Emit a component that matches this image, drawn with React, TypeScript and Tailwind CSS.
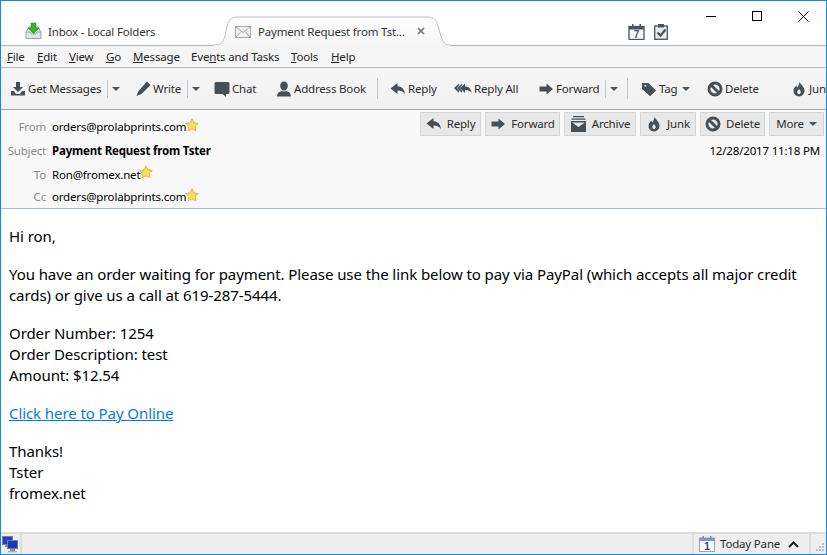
import React from 'react';

const ICON = '#474f55';

const Icon: React.FC<{ w?: number; h?: number; vb?: string; children: React.ReactNode }> = ({ w = 16, h = 16, vb = '0 0 16 16', children }) => (
    <svg width={w} height={h} viewBox={vb} fill={ICON} className="shrink-0">{children}</svg>
);

const GetIcon = () => (
    <Icon>
        <path d="M6 1h4v5h3L8 11 3 6h3z" />
        <path d="M1 10h3l2 3h4l2-3h3v4.500H1z" />
    </Icon>
);
const WriteIcon = () => (
    <Icon><path d="M12 .500l3.500 3.500-9 9-5 2 2-5z" /></Icon>
);
const ChatIcon = () => (
    <Icon>
        <path d="M2 1h12a1.500 1.500 0 0 1 1.500 1.500v9A1.500 1.500 0 0 1 14 13h-2v3l-3.500-3H2A1.500 1.500 0 0 1 .500 11.500v-9A1.500 1.500 0 0 1 2 1z" />
    </Icon>
);
const PersonIcon = () => (
    <Icon>
        <path d="M8 .500c2.400 0 3.800 1.800 3.800 4.200S10.200 9.500 8 9.500 4.200 7.100 4.200 4.700 5.600.500 8 .500z" />
        <path d="M1 15.500c0-3.200 1.500-4.800 5-5.500 1.200.8 2.800.8 4 0 3.500.7 5 2.300 5 5.500z" />
    </Icon>
);
const ReplyIcon = () => (
    <Icon><path d="M7.500 2v3.300c4.200 0 7 2.700 7.500 8-1.500-2.700-3.700-3.800-7.500-3.800V13L.500 7.500z" /></Icon>
);
const ReplyAllIcon = () => (
    <Icon w={18} vb="0 0 18 16">
        <path d="M5 2.500v1.800L2.800 7 5 9.700v2.300L0 7z" />
        <path d="M8 2.500v1.800L5.800 7 8 9.700v2.300L3 7z" />
        <path d="M11 2.500v3c3.500 0 6 2 6.500 6.500-1.500-2.200-3.300-3-6.500-3v3L6 7z" />
    </Icon>
);
const ForwardIcon = () => (
    <Icon><path d="M8.500 2.500L15 8l-6.500 5.500V10.500H1.500v-5h7z" /></Icon>
);
const TagIcon = () => (
    <Icon>
        <path fillRule="evenodd" d="M1 2h6.500l7.500 7.500-5.800 5.800L1 8zM4.300 3.800a1 1 0 1 0 0 2 1 1 0 0 0 0-2z" />
    </Icon>
);
const DeleteIcon = () => (
    <Icon>
        <path fillRule="evenodd" d="M8 .500a7.500 7.500 0 1 1 0 15 7.500 7.500 0 0 1 0-15zM3.900 6a4.600 4.600 0 0 0 6.100 6.100zM6 3.900l6.100 6.100A4.600 4.600 0 0 0 6 3.900z" />
    </Icon>
);
const JunkIcon = () => (
    <Icon>
        <path fillRule="evenodd" d="M8.500.500c0 2.500 5 4.500 5 9.300 0 3.300-2.500 5.700-5.500 5.700s-5.500-2.400-5.500-5.700c0-2.600 1.800-3.800 2.800-5.300.3 1 .6 1.500 1.200 2C7.300 5 8.300 3 8.500.500zM8 8c-1 1-1.700 1.900-1.700 3.200 0 1 .8 1.800 1.700 1.800s1.700-.8 1.700-1.800C9.700 9.900 9 9 8 8z" />
    </Icon>
);
const ArchiveIcon = () => (
    <Icon w={17} h={18} vb="0 0 17 18">
        <path d="M3 1h11v1.200H3zM1.500 3.500h14v1.200h-14z" />
        <path d="M1 6h15v11H1zM2.500 7.800L8.500 12l6-4.200v-.3h-12z" />
    </Icon>
);

const Caret: React.FC<{ className?: string }> = ({ className = '' }) => (
    <span className={`shrink-0 w-0 h-0 border-x-[4px] border-x-transparent border-t-[4px] border-t-[#4d555b] ${className}`}></span>
);

const Sep: React.FC<{ className?: string }> = ({ className = '' }) => (
    <span className={`shrink-0 w-px bg-[#c4c6c8] ${className}`}></span>
);

const Star = () => (
    <svg width="14" height="14" viewBox="0 0 13 13" className="shrink-0 -ml-px -mt-1">
        <path d="M6.500.8l1.800 3.700 4 .6-2.900 2.800.7 4-3.600-1.900-3.600 1.900.7-4L.7 5.100l4-.6z" fill="#fcdc5e" stroke="#d8ac3c" strokeWidth="0.8" />
    </svg>
);

const TopBtn: React.FC<{ icon: React.ReactNode; label: string; className?: string }> = ({ icon, label, className = '' }) => (
    <div className={`shrink-0 flex items-center gap-[2px] ${className}`}>
        {icon}
        <span>{label}</span>
    </div>
);

const HdrBtn: React.FC<{ icon?: React.ReactNode; label: string; w: string; caret?: boolean }> = ({ icon, label, w, caret }) => (
    <div className={`h-6 flex items-center justify-center gap-[5px] bg-[#e8e8e8] border border-[#d4d4d4] text-[#2d2d2d] ${w}`}>
        {icon}
        <span>{label}</span>
        {caret && <Caret />}
    </div>
);

const HdrRow: React.FC<{ label: string; className?: string; children: React.ReactNode }> = ({ label, className = '', children }) => (
    <div className={`flex items-center ${className}`}>
        <span className="w-[45px] text-right text-[#8a8a8a] shrink-0">{label}</span>
        <span className="ml-[6px] flex items-center text-black">{children}</span>
    </div>
);

const MenuItem: React.FC<{ pre?: string; u: string; post: string; w: string }> = ({ pre = '', u, post, w }) => (
    <span className={w}>{pre}<span className="underline">{u}</span>{post}</span>
);

const App: React.FC = () => {
    return (
        <div className="w-[827px] h-[555px] overflow-hidden flex flex-col bg-white border border-[#1a86d9] text-[11.5px] tracking-[-0.18px] text-[#2b2b2b] font-['Noto_Sans','Open_Sans',sans-serif]">
            {/* title bar + tabs */}
            <div className="h-[45px] flex shrink-0 relative border-b border-[#aab4be]">
                <div className="w-[224px] pl-6 pt-[22px] flex items-start gap-[6px]">
                    <svg width="17" height="18" viewBox="0 0 17 18" className="shrink-0 -mt-[1px]">
                        <path d="M1 10l3-5h9l3 5v6.500H1z" fill="#dfe4e6" stroke="#9aa5aa" />
                        <path d="M1 10h4l1.500 2h4L12 10h4" fill="none" stroke="#9aa5aa" />
                        <path d="M6 1h5v5h3l-5.500 5.500L3 6h3z" fill="#3fae2a" stroke="#2c8a1c" strokeWidth="0.6" />
                    </svg>
                    <span className="text-[#333] leading-[18px]">Inbox - Local Folders</span>
                </div>
                <div className="w-[216px] h-[29px] mt-4 relative flex items-center pl-[10px] -mb-px">
                    <svg width="237" height="30" viewBox="0 0 237 30" className="absolute -left-[12px] -top-[1px]">
                        <defs>
                            <linearGradient id="tab" x1="0" y1="0" x2="0" y2="1">
                                <stop offset="0" stopColor="#ffffff" />
                                <stop offset="1" stopColor="#f5f5f5" />
                            </linearGradient>
                        </defs>
                        <path d="M0 29C8 29 10 27 12 20L14 10C16 3 19 1 26 1H214C221 1 223 3 225 10L228 20C230 27 232 29 237 29V30H0z" fill="url(#tab)" />
                        <path d="M0 29C8 29 10 27 12 20L14 10C16 3 19 1 26 1H214C221 1 223 3 225 10L228 20C230 27 232 29 237 29" fill="none" stroke="#bcc2c7" />
                    </svg>
                    <svg width="16" height="12" viewBox="0 0 16 12" className="shrink-0 relative">
                        <rect x="0.500" y="0.500" width="15" height="11" fill="#f1f1f1" stroke="#a4a8aa" />
                        <path d="M1 1l7 5.500L15 1M1 11l5-5.500M15 11l-5-5.500" fill="none" stroke="#a4a8aa" />
                    </svg>
                    <span className="ml-[7px] text-[#333] relative">Payment Request from Tst...</span>
                    <svg width="8" height="8" viewBox="0 0 8 8" className="absolute left-[192px] top-[10px]">
                        <path d="M1 1l6 6M7 1L1 7" stroke="#70767a" strokeWidth="1.700" />
                    </svg>
                </div>
                <div className="flex items-start pt-[23px] ml-[187px] gap-[9px]">
                    <svg width="17" height="16" viewBox="0 0 17 16" className="shrink-0">
                        <rect x="1" y="2.500" width="15" height="13" fill="#f4f5f6" stroke="#4d555b" strokeWidth="1.300" />
                        <path d="M1 3h15v2.500H1zM4 0h1.500v3H4zM11.500 0H13v3h-1.500z" fill="#4d555b" />
                        <text x="8.500" y="14" fontSize="10" fontWeight="700" textAnchor="middle" fill="#4d555b" fontFamily="Liberation Sans">7</text>
                    </svg>
                    <svg width="14" height="16" viewBox="0 0 14 16" className="shrink-0">
                        <rect x="0.700" y="2" width="12.600" height="13.300" fill="#e7e9ea" stroke="#4d555b" strokeWidth="1.300" />
                        <path d="M4 0h6v3.500H4z" fill="#4d555b" />
                        <path d="M3.500 8.500l3 3 5-6" fill="none" stroke="#4d555b" strokeWidth="2.200" />
                    </svg>
                </div>
                {/* window controls */}
                <div className="absolute top-0 right-0 flex">
                    <div className="w-[46px] h-[30px] flex items-center justify-center"><span className="w-[10px] h-px bg-black"></span></div>
                    <div className="w-[46px] h-[30px] flex items-center justify-center"><span className="w-[10px] h-[10px] border border-black"></span></div>
                    <div className="w-[46px] h-[30px] flex items-center justify-center">
                        <svg width="11" height="11" viewBox="0 0 11 11"><path d="M.5.500l10 10M10.500.500l-10 10" stroke="#000" strokeWidth="1" /></svg>
                    </div>
                </div>
            </div>

            {/* menu */}
            <div className="h-[22px] flex items-center pl-[6px] bg-[#f5f5f5] border-b border-[#b4b6b8] shrink-0 text-[#222]">
                <MenuItem u="F" post="ile" w="w-[30px]" />
                <MenuItem u="E" post="dit" w="w-[32px]" />
                <MenuItem u="V" post="iew" w="w-[37px]" />
                <MenuItem u="G" post="o" w="w-[27px]" />
                <MenuItem u="M" post="essage" w="w-[58px]" />
                <MenuItem pre="Eve" u="n" post="ts and Tasks" w="w-[100px]" />
                <MenuItem u="T" post="ools" w="w-[40px]" />
                <MenuItem u="H" post="elp" w="w-[30px]" />
            </div>

            {/* main toolbar */}
            <div className="h-[42px] flex items-center pl-[9px] bg-gradient-to-b from-[#f5f5f5] to-[#f1f1f1] border-b border-[#a3a8ad] shrink-0 overflow-hidden whitespace-nowrap">
                <TopBtn icon={<GetIcon />} label="Get Messages" className="w-[97px]" />
                <Sep className="h-[18px]" />
                <Caret className="ml-[4px]" />
                <TopBtn icon={<WriteIcon />} label="Write" className="ml-[15px] w-[52px]" />
                <Sep className="h-[18px]" />
                <Caret className="ml-[4px]" />
                <TopBtn icon={<ChatIcon />} label="Chat" className="ml-[14px] w-[62px]" />
                <TopBtn icon={<PersonIcon />} label="Address Book" className="w-[101px]" />
                <Sep className="h-[21px] bg-[#a8acb0]" />
                <TopBtn icon={<ReplyIcon />} label="Reply" className="ml-3 w-[64px]" />
                <TopBtn icon={<ReplyAllIcon />} label="Reply All" className="w-[84px]" />
                <TopBtn icon={<ForwardIcon />} label="Forward" className="w-[67px]" />
                <Sep className="h-[18px]" />
                <Caret className="ml-[4px]" />
                <Sep className="h-[21px] ml-[9px] bg-[#a8acb0]" />
                <TopBtn icon={<TagIcon />} label="Tag" className="ml-[13px] w-[41px]" />
                <Caret />
                <TopBtn icon={<DeleteIcon />} label="Delete" className="ml-[17px] w-[84px]" />
                <TopBtn icon={<JunkIcon />} label="Junk" />
            </div>

            {/* message header */}
            <div className="h-[99px] flex flex-col bg-[#f8f8f8] border-b border-[#a9bccd] shrink-0 pt-[2px] pr-[2px] relative">
                <div className="flex justify-between items-start h-[28px]">
                    <HdrRow label="From" className="pt-[6px]">orders@prolabprints.com<Star /></HdrRow>
                    <div className="flex gap-1">
                        <HdrBtn icon={<ReplyIcon />} label="Reply" w="w-[61px]" />
                        <HdrBtn icon={<ForwardIcon />} label="Forward" w="w-[75px]" />
                        <HdrBtn icon={<ArchiveIcon />} label="Archive" w="w-[72px]" />
                        <HdrBtn icon={<JunkIcon />} label="Junk" w="w-[56px]" />
                        <HdrBtn icon={<DeleteIcon />} label="Delete" w="w-[65px]" />
                        <HdrBtn label="More" w="w-[55px]" caret />
                    </div>
                </div>
                <div className="flex justify-between items-center h-[22px]">
                    <HdrRow label="Subject"><span className="font-bold">Payment Request from Tster</span></HdrRow>
                    <span className="text-black pr-[4px]">12/28/2017 11:18 PM</span>
                </div>
                <HdrRow label="To" className="h-[24px] pt-[2px]">Ron@fromex.net<Star /></HdrRow>
                <HdrRow label="Cc" className="h-[23px]">orders@prolabprints.com<Star /></HdrRow>
            </div>

            {/* message body */}
            <div className="flex-1 pl-2 pr-2 pt-[17px] text-[15px] tracking-[-0.08px] leading-[21px] text-black">
                <p>Hi ron,</p>
                <p className="mt-[17px]">You have an order waiting for payment. Please use the link below to pay via PayPal (which accepts all major credit cards) or give us a call at 619-287-5444.</p>
                <p className="mt-[17px]">Order Number: 1254<br />Order Description: test<br />Amount: $12.54</p>
                <p className="mt-[17px]"><a href="#" className="text-[#0a7ae0] underline">Click here to Pay Online</a></p>
                <p className="mt-[17px]">Thanks!<br />Tster<br />fromex.net</p>
            </div>

            {/* status bar */}
            <div className="h-[22px] flex items-stretch bg-[#eeeeee] border-t-2 border-[#dcdcdc] shrink-0 relative">
                <div className="w-[21px] border-r-2 border-[#dcdcdc] flex items-center justify-center">
                    <svg width="17" height="17" viewBox="0 0 17 17">
                        <rect x="0.500" y="0.500" width="10" height="8" fill="#1a3ccf" stroke="#7a8088" />
                        <rect x="3" y="9" width="5" height="2" fill="#8a8f94" />
                        <rect x="5.500" y="4.500" width="10" height="8" fill="#1636c8" stroke="#7a8088" />
                        <rect x="8" y="13" width="5" height="2" fill="#8a8f94" />
                        <rect x="6" y="15" width="9" height="1.500" fill="#b0b4b8" />
                    </svg>
                </div>
                <div className="flex-1"></div>
                <div className="w-[119px] border-l-2 border-r-2 border-[#dcdcdc] flex items-center pl-[5px] gap-[5px] text-[#2b2b2b]">
                    <svg width="16" height="16" viewBox="0 0 16 16" className="shrink-0">
                        <rect x="0.500" y="2" width="15" height="13.500" fill="#fdfdfd" stroke="#9aa4b4" />
                        <rect x="0.500" y="2" width="15" height="3" fill="#6f9bd8" />
                        <path d="M3.500 0h1.500v3.500H3.500zM11 0h1.500v3.500H11z" fill="#8a8f94" />
                        <text x="8" y="14" fontSize="10" fontWeight="700" textAnchor="middle" fill="#2b3a90" fontFamily="Liberation Sans">1</text>
                    </svg>
                    <span>Today Pane</span>
                    <svg width="11" height="7" viewBox="0 0 11 7" className="ml-[3px]"><path d="M1 6l4.500-4.500L10 6" fill="none" stroke="#222" strokeWidth="2" /></svg>
                </div>
                <div className="w-[15px] flex items-end justify-end pb-px pr-px">
                    <svg width="10" height="10" viewBox="0 0 10 10" fill="#c0c0c0">
                        <rect x="7" y="0" width="2" height="2" /><rect x="4" y="3" width="2" height="2" /><rect x="7" y="3" width="2" height="2" />
                        <rect x="1" y="6" width="2" height="2" /><rect x="4" y="6" width="2" height="2" /><rect x="7" y="6" width="2" height="2" />
                    </svg>
                </div>
            </div>
        </div>
    );
};

export default App;
